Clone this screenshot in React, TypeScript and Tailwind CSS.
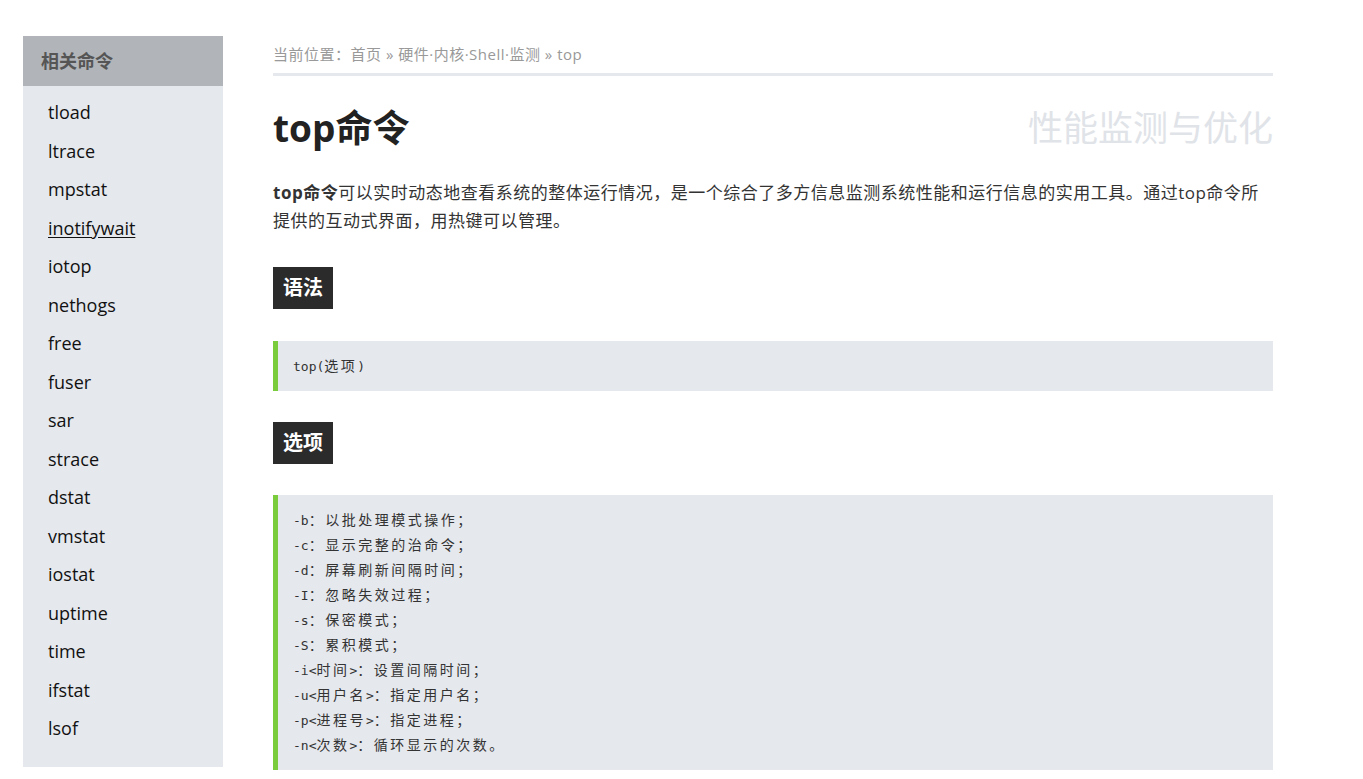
const related = [
  'tload',
  'ltrace',
  'mpstat',
  'inotifywait',
  'iotop',
  'nethogs',
  'free',
  'fuser',
  'sar',
  'strace',
  'dstat',
  'vmstat',
  'iostat',
  'uptime',
  'time',
  'ifstat',
  'lsof',
];

const options = [
  '-b：以批处理模式操作；',
  '-c：显示完整的治命令；',
  '-d：屏幕刷新间隔时间；',
  '-I：忽略失效过程；',
  '-s：保密模式；',
  '-S：累积模式；',
  '-i<时间>：设置间隔时间；',
  '-u<用户名>：指定用户名；',
  '-p<进程号>：指定进程；',
  '-n<次数>：循环显示的次数。',
];

// wide glyphs in the code blocks take a double cell, so space them out
function CodeLine({ text }: { text: string }) {
  const parts = text.split(/([\u3000-\u9fff\uff00-\uffef]+)/);
  return (
    <div className="leading-[25px]">
      {parts.map((p, i) =>
        i % 2 === 1 ? (
          <span key={i} className="text-[14px] tracking-[2.5px]">
            {p}
          </span>
        ) : (
          <span key={i}>{p}</span>
        )
      )}
    </div>
  );
}

function SectionTitle({ children }: { children: string }) {
  return (
    <h2 className="inline-flex items-center h-[42px] px-[10px] bg-[#2b2b2b] text-white text-[20px] font-bold">
      {children}
    </h2>
  );
}

function CodeBlock({ lines }: { lines: string[] }) {
  return (
    <pre className="border-l-[5px] border-[#7acc3c] bg-[#e5e8ed] pl-[15px] py-[12.5px] text-[13px] text-[#333] font-['DejaVu_Sans_Mono','Noto_Sans_CJK_SC',monospace]">
      {lines.map((l) => (
        <CodeLine key={l} text={l} />
      ))}
    </pre>
  );
}

export default function App() {
  return (
    <div className="min-h-screen bg-white flex pl-[23px] pt-[36px] font-['Open_Sans','Noto_Sans_CJK_SC',sans-serif]">
      {/* Sidebar */}
      <aside className="w-[200px] shrink-0 self-start">
        <div className="h-[50px] bg-[#b1b4b8] pl-[18px] flex items-center text-[18px] font-bold text-[#555]">
          相关命令
        </div>
        <ul className="bg-[#e5e8ed] pt-[7px] pb-[19px]">
          {related.map((name) => (
            <li
              key={name}
              className={
                name === 'inotifywait'
                  ? 'pl-[25px] leading-[38.5px] text-[18px] text-[#111] underline underline-offset-2'
                  : 'pl-[25px] leading-[38.5px] text-[18px] text-[#111]'
              }
            >
              {name}
            </li>
          ))}
        </ul>
      </aside>

      {/* Main */}
      <main className="ml-[50px] w-[1000px] shrink-0">
        <div className="pt-[8px] pb-[9px] border-b-[3px] border-[#e5e8ed] text-[15px] tracking-[0.5px] leading-[20px] text-[#999]">
          当前位置：首页 » 硬件·内核·Shell·监测 » top
        </div>

        <div className="mt-[28px] flex items-center justify-between h-[48px]">
          <h1 className="text-[37px] font-bold text-[#222] leading-[48px]">top命令</h1>
          <span className="text-[35px] text-[#e0e3e8] leading-[48px]">性能监测与优化</span>
        </div>

        <p className="mt-[27px] text-[17px] tracking-[0.5px] leading-[28px] text-[#333]">
          <strong className="font-bold">top命令</strong>可以实时动态地查看系统的整体运行情况，是一个综合了多方信息监测系统性能和运行信息的实用工具。通过top命令所提供的互动式界面，用热键可以管理。
        </p>

        <div className="mt-[32px]">
          <SectionTitle>语法</SectionTitle>
        </div>
        <div className="mt-[32px]">
          <CodeBlock lines={['top(选项)']} />
        </div>

        <div className="mt-[31px]">
          <SectionTitle>选项</SectionTitle>
        </div>
        <div className="mt-[31px]">
          <CodeBlock lines={options} />
        </div>
      </main>
    </div>
  );
}
